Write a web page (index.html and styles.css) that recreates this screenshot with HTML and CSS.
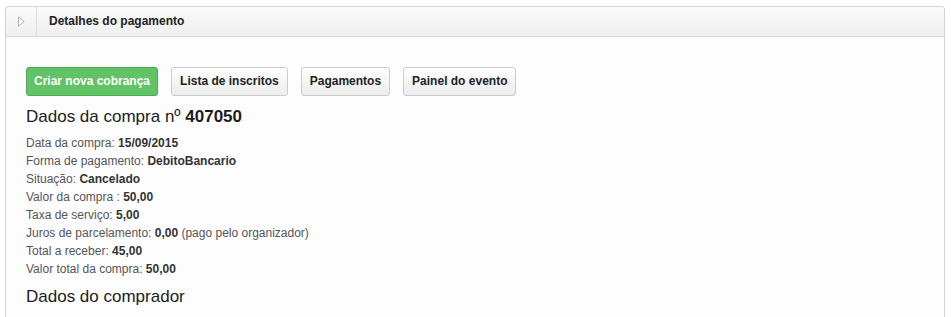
FILE: index.html
```html
<!DOCTYPE html>
<html lang="pt-BR">

<head>
  <meta charset="UTF-8">
  <meta name="viewport" content="width=device-width, initial-scale=1.0">
  <title>Detalhes do pagamento</title>
  <link rel="stylesheet" href="styles.css">
</head>

<body>

  <section class="panel">
    <header class="panel__header">
      <span class="panel__toggle">
        <svg width="7" height="11" viewBox="0 0 7 11">
          <path d="M0.5 0.8 L6.2 5.5 L0.5 10.2 Z" fill="#fafafa" stroke="#b5b5b5" stroke-width="1" />
        </svg>
      </span>
      <h2 class="panel__title">Detalhes do pagamento</h2>
    </header>

    <div class="panel__body">
      <div class="actions">
        <a class="btn btn--success" href="#">Criar nova cobrança</a>
        <a class="btn" href="#">Lista de inscritos</a>
        <a class="btn" href="#">Pagamentos</a>
        <a class="btn" href="#">Painel do evento</a>
      </div>

      <h3 class="section-title">Dados da compra nº <strong>407050</strong></h3>

      <ul class="details">
        <li>Data da compra: <strong>15/09/2015</strong></li>
        <li>Forma de pagamento: <strong>DebitoBancario</strong></li>
        <li>Situação: <strong>Cancelado</strong></li>
        <li>Valor da compra : <strong>50,00</strong></li>
        <li>Taxa de serviço: <strong>5,00</strong></li>
        <li>Juros de parcelamento: <strong>0,00</strong> (pago pelo organizador)</li>
        <li>Total a receber: <strong>45,00</strong></li>
        <li>Valor total da compra: <strong>50,00</strong></li>
      </ul>

      <h3 class="section-title">Dados do comprador</h3>
    </div>
  </section>

</body>

</html>
```

FILE: styles.css
```css
*,
*:after,
*:before {
  margin: 0;
  padding: 0;
  box-sizing: border-box;
}

body {
  font-family: "Liberation Sans", Arial, sans-serif;
  background: #fff;
  padding: 6px 6px 0 5px;
  color: #333;
  overflow: hidden;
}

.panel {
  border: 1px solid #d4d4d4;
  border-bottom: 0;
  border-radius: 4px 4px 0 0;
  background: #fdfdfd;
  min-height: 320px;
}

.panel__header {
  display: flex;
  height: 30px;
  background: linear-gradient(#fafafa, #efefef);
  border-bottom: 1px solid #d9d9d9;
  border-radius: 4px 4px 0 0;
}

.panel__toggle {
  width: 31px;
  display: flex;
  align-items: center;
  justify-content: center;
  border-right: 1px solid #dcdcdc;
}

.panel__title {
  font-size: 12px;
  font-weight: bold;
  color: #222;
  line-height: 29px;
  padding-left: 12px;
}

.panel__body {
  padding: 30px 20px 0;
}

.actions {
  display: flex;
  gap: 13px;
}

.btn {
  display: block;
  height: 29px;
  line-height: 27px;
  padding: 0 8px;
  font-size: 12px;
  font-weight: bold;
  color: #222;
  text-decoration: none;
  border: 1px solid #ccc;
  border-radius: 3px;
  background: linear-gradient(#fefefe, #ececec);
}

.btn--success {
  color: #fff;
  padding: 0 7px;
  background: #62c266;
  border-color: #4fa854;
}

.section-title {
  font-size: 17px;
  font-weight: normal;
  color: #1c1c1c;
  line-height: 22px;
  margin-top: 10px;
}

.section-title strong {
  font-weight: bold;
}

.details {
  list-style: none;
  margin-top: 6px;
  font-size: 12px;
  line-height: 18px;
  color: #555;
}

.details strong {
  color: #333;
}

.details + .section-title {
  margin-top: 8px;
}
```
